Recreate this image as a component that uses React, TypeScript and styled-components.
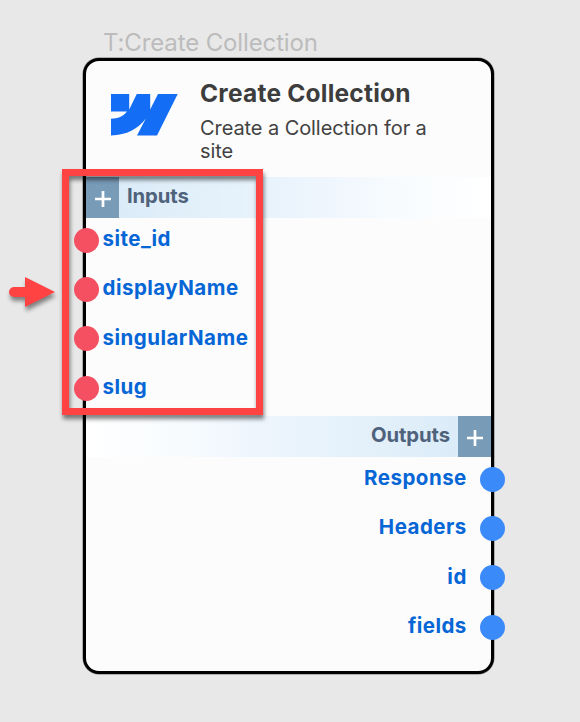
import React from 'react';
import styled, { createGlobalStyle } from 'styled-components';

const GlobalStyle = createGlobalStyle`
  * { box-sizing: border-box; }
  body { margin: 0; background: #e8e8e8; font-family: Inter, 'Liberation Sans', sans-serif; }
`;

const Canvas = styled.main`
  position: relative;
  width: 580px;
  height: 722px;
  overflow: hidden;
  padding: 28px 0 0 83px;
  background: #e8e8e8;
`;

const NodeLabel = styled.div`
  height: 30px;
  padding-left: 20px;
  font-size: 24px;
  line-height: 30px;
  font-weight: 400;
  letter-spacing: -0.13px;
  color: #bcbcbc;
  white-space: nowrap;
`;

const Card = styled.section`
  width: 411px;
  height: 616px;
  border: 3px solid #000;
  border-radius: 16px;
  background: #fcfcfc;
  box-shadow: 0 0 0 0.5px rgba(0, 0, 0, 0.5);
`;

const Header = styled.header`
  display: flex;
  height: 115.5px;
  padding: 18px 0 0 25px;
`;

const Logo = styled.svg`
  width: 67px;
  height: 42px;
  margin: 15px 22px 0 0;
  flex: none;
`;

const Heading = styled.h1`
  margin: 0;
  font-size: 24.5px;
  line-height: 28px;
  font-weight: 700;
  letter-spacing: 0.22px;
  color: #3d3d3d;
  white-space: nowrap;
`;

const Description = styled.p`
  margin: 10px 0 0;
  width: 240px;
  font-size: 20px;
  line-height: 23px;
  font-weight: 400;
  letter-spacing: -0.08px;
  color: #424242;
`;

const Band = styled.div<{ $side: 'left' | 'right' }>`
  display: flex;
  flex-direction: ${(p) => (p.$side === 'left' ? 'row' : 'row-reverse')};
  height: 41px;
  background: linear-gradient(
    to ${(p) => (p.$side === 'left' ? 'right' : 'left')},
    #d8eaf7 0%, #e6f2fb 38%, #eef5fd 58%, #f7fbfe 75%, #ffffff 100%
  );
`;

const AddButton = styled.button`
  display: flex;
  align-items: center;
  justify-content: center;
  width: 33px;
  height: 41px;
  padding: 3px 0 0;
  border: 0;
  background: #789bb7;
`;

const BandTitle = styled.h2`
  margin: 0;
  padding: 0 8px;
  font-size: 20.3px;
  line-height: 38px;
  font-weight: 700;
  letter-spacing: -0.1px;
  color: #4f627b;
`;

const PortList = styled.ul`
  list-style: none;
  margin: 0;
  padding: 0;
  height: 198px;
`;

const Port = styled.li<{ $side: 'left' | 'right' }>`
  display: flex;
  flex-direction: ${(p) => (p.$side === 'left' ? 'row' : 'row-reverse')};
  align-items: center;
  gap: ${(p) => (p.$side === 'left' ? '3.5px' : '12.7px')};
  height: 49.4px;
  padding-bottom: 4.4px;
  margin: ${(p) => (p.$side === 'left' ? '0 0 0 -12px' : '0 -13.5px 0 0')};
`;

const Dot = styled.span<{ $side: 'left' | 'right' }>`
  width: 25px;
  height: 25px;
  border-radius: 50%;
  background: ${(p) => (p.$side === 'left' ? '#f55062' : '#3b8afa')};
`;

const PortName = styled.span`
  margin-bottom: 3px;
  font-size: 20.5px;
  line-height: 25px;
  font-weight: 700;
  letter-spacing: 0.48px;
  color: #0666d6;
`;

const Highlight = styled.div`
  position: absolute;
  left: 62px;
  top: 169px;
  width: 201px;
  height: 246px;
  border: 7px solid #ff4343;
  filter: drop-shadow(1px 4px 2px rgba(0, 0, 0, 0.5));
`;

const Arrow = styled.svg`
  position: absolute;
  left: 0;
  top: 270px;
  width: 62px;
  height: 46px;
  overflow: visible;
  filter: drop-shadow(1px 4px 2px rgba(0, 0, 0, 0.45));
`;

const Plus = () => (
  <svg width="16" height="16" viewBox="0 0 16 16">
    <path d="M8 0V16M0 8H16" stroke="#fff" strokeWidth="2.7" />
  </svg>
);

type PortsProps = { side: 'left' | 'right'; title: string; names: string[] };

const Ports = ({ side, title, names }: PortsProps) => (
  <>
    <Band $side={side}>
      <AddButton aria-label={`Add to ${title}`}>
        <Plus />
      </AddButton>
      <BandTitle>{title}</BandTitle>
    </Band>
    <PortList>
      {names.map((name) => (
        <Port key={name} $side={side}>
          <Dot $side={side} />
          <PortName>{name}</PortName>
        </Port>
      ))}
    </PortList>
  </>
);

export default function App() {
  return (
    <>
      <GlobalStyle />
      <Canvas>
        <NodeLabel>T:Create Collection</NodeLabel>
        <Card>
          <Header>
            <Logo viewBox="0 0 67 42">
              <path
                d="M0 0H18.2V15.5L25.8 0H39.2V15.5L47 0H66.7L46 41.5H26L34.8 24.5C27 35 16 41 0 41.5V24.7C7 24.7 12 22.5 16 17.5H0Z"
                fill="#146ef5"
              />
            </Logo>
            <div>
              <Heading>Create Collection</Heading>
              <Description>Create a Collection for a site</Description>
            </div>
          </Header>
          <Ports side="left" title="Inputs" names={['site_id', 'displayName', 'singularName', 'slug']} />
          <Ports side="right" title="Outputs" names={['Response', 'Headers', 'id', 'fields']} />
        </Card>
        <Highlight />
        <Arrow viewBox="0 0 62 46">
          <path d="M14 17H25V7L55 22L25 37V27H14A5 5 0 0 1 14 17Z" fill="#ff4343" />
        </Arrow>
      </Canvas>
    </>
  );
}
